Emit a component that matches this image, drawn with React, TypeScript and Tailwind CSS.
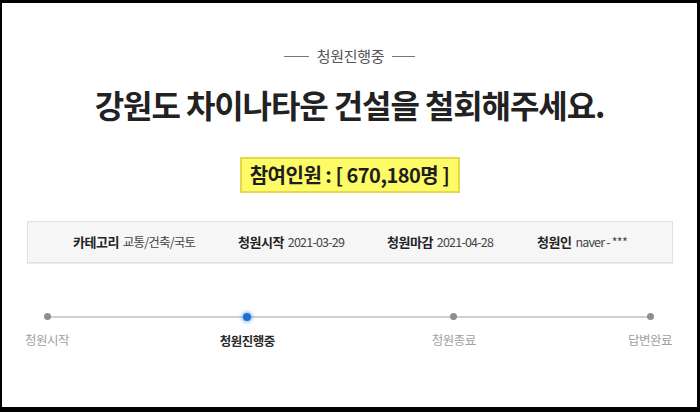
import React from "react";

const FONT = "font-['Malgun_Gothic','Noto_Sans_CJK_KR',sans-serif]";

function Step({ label, active }: { label: string; active?: boolean }) {
  return (
    <div className="w-0 flex flex-col items-center relative z-10">
      {active ? (
        <div className="w-[8px] h-[8px] shrink-0 rounded-full bg-[#1d6fd0] shadow-[0_0_3px_2px_rgba(80,150,240,0.45)]" />
      ) : (
        <div className="w-[7px] h-[7px] shrink-0 rounded-full bg-[#8e8e8e]" />
      )}
      <div
        className={
          "mt-[11px] whitespace-nowrap text-[12.5px] tracking-[-0.5px] " +
          (active ? "font-bold text-[#2a2a2a]" : "text-[#a0a0a0]")
        }
      >
        {label}
      </div>
    </div>
  );
}

function Info({ k, v }: { k: string; v: string }) {
  return (
    <div className="flex items-baseline gap-[4px]">
      <span className="font-bold text-[13px] text-[#222] tracking-[-0.5px]">{k}</span>
      <span className="text-[12.5px] text-[#444] tracking-[-0.8px]">{v}</span>
    </div>
  );
}

export default function App() {
  return (
    <div className={"w-[700px] h-[412px] bg-black pt-[3px] pl-[2px] pr-[3px] pb-[5px] " + FONT}>
      <div className="w-full h-full bg-white flex flex-col items-center">
        <div className="mt-[42px] flex items-center gap-[8px] text-[#555]">
          <div className="w-[25px] h-px bg-[#777]" />
          <span className="text-[15px] tracking-[-0.3px]">청원진행중</span>
          <div className="w-[23px] h-px bg-[#777]" />
        </div>
        <h1 className="mt-[16px] text-[32px] leading-[40px] font-bold text-[#222] tracking-[-1.1px]">
          강원도 차이나타운 건설을 철회해주세요.
        </h1>
        <div className="mt-[33px] w-[220px] h-[36px] bg-[#fdfb66] border-2 border-[#e6d74e] flex items-center justify-center text-[20px] font-bold text-[#1e1e1e] tracking-[-0.5px]">
          참여인원 : [ 670,180명 ]
        </div>
        <div className="mt-[28px] ml-[1px] w-[646px] h-[42px] bg-[#f6f6f6] border border-[#e2e2e2] shadow-[0_1px_1px_rgba(0,0,0,0.08)] flex items-center pl-[45px]">
          <div className="w-[165px]"><Info k="카테고리" v="교통/건축/국토" /></div>
          <div className="w-[149px]"><Info k="청원시작" v="2021-03-29" /></div>
          <div className="w-[150px]"><Info k="청원마감" v="2021-04-28" /></div>
          <div><Info k="청원인" v="naver - ***" /></div>
        </div>
        <div className="mt-[50px] self-start ml-[45px] w-[603px] flex items-start">
          <Step label="청원시작" />
          <div className="flex-1 h-[2px] mt-[3px] bg-[#cfcfcf]" />
          <Step label="청원진행중" active />
          <div className="flex-[1.03] h-[2px] mt-[3px] bg-[#cfcfcf]" />
          <Step label="청원종료" />
          <div className="flex-[0.98] h-[2px] mt-[3px] bg-[#cfcfcf]" />
          <Step label="답변완료" />
        </div>
      </div>
    </div>
  );
}
